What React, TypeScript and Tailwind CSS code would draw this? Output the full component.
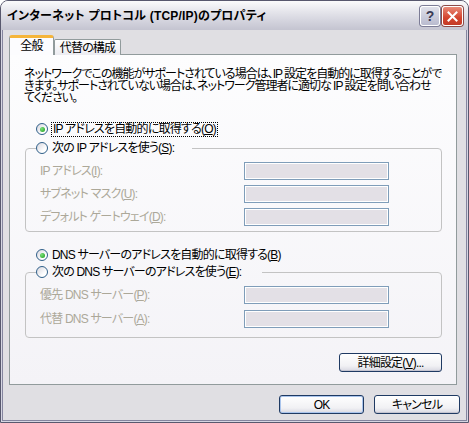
import React from 'react';

const font = "font-['Liberation_Sans','Noto_Sans_CJK_JP',sans-serif] [font-feature-settings:'palt']";

const Radio = ({ checked }: { checked?: boolean }) => (
  <span className="inline-flex w-[12px] h-[12px] shrink-0 items-center justify-center rounded-full border border-[#2f5f89] bg-[linear-gradient(135deg,#d6d6de,#ffffff_70%)]">
    {checked && <span className="w-[5px] h-[5px] rounded-full bg-[radial-gradient(circle_at_35%_35%,#7be07b,#1a9a1a)]" />}
  </span>
);

const Field = () => (
  <div className="w-[145px] h-[18px] border border-[#7f9db9] bg-[#e3e0e6] shadow-[inset_0_0_0_1px_#ffffff]" />
);

const Row = ({ label }: { label: React.ReactNode }) => (
  <div className="flex items-center h-[18px]">
    <span className="ml-[14px] w-[204px] text-[#aca899] whitespace-nowrap">{label}</span>
    <Field />
  </div>
);

const Button = ({ children, def, className = '' }: { children: React.ReactNode; def?: boolean; className?: string }) => (
  <button
    className={`h-[19px] rounded-[3px] border border-[#1f3a63] bg-[linear-gradient(#ffffff,#f1f1f4_70%,#d8d8e2)] text-[12px] leading-none text-black ${
      def ? 'shadow-[inset_0_0_0_1px_#a9c4ec]' : 'shadow-[inset_0_-1px_0_#c4c4d0]'
    } ${className}`}
  >
    {children}
  </button>
);

export default function App() {
  return (
    <div className={`w-[469px] h-[423px] ${font} text-[12px] text-black`}>
      <div className="flex h-full flex-col overflow-hidden rounded-t-[8px] border border-[#58586e] bg-[#e0dfe3]">
        {/* title bar */}
        <div className="flex h-[29px] shrink-0 items-center bg-[linear-gradient(#fbfbfc,#e6e6ec_35%,#d3d3dd_70%,#c4c4d0)] pl-[6px] pr-[5px] pt-[1px]">
          <span className="flex-1 text-[12px] font-bold tracking-[0.2px] whitespace-nowrap">
            インターネット プロトコル (TCP/IP)のプロパティ
          </span>
          <div className="flex items-center gap-[2px]">
            <div className="flex h-[20px] w-[20px] items-center justify-center rounded-[3px] border border-[#ffffff] bg-[linear-gradient(#dfe0ea,#b9bbcf)] shadow-[0_0_0_1px_#7c7c96] text-[14px] font-bold leading-none text-[#3b3b55]">
              ?
            </div>
            <div className="flex h-[20px] w-[21px] items-center justify-center rounded-[3px] border border-[#ffffff] bg-[linear-gradient(#e98a78,#d3442f_60%,#c43a26)] shadow-[0_0_0_1px_#8c4a48]">
              <svg width="11" height="11" viewBox="0 0 11 11">
                <path d="M1.5 1.5 L9.5 9.5 M9.5 1.5 L1.5 9.5" stroke="#ffffff" strokeWidth="2" strokeLinecap="square" />
              </svg>
            </div>
          </div>
        </div>

        {/* window frame */}
        <div className="flex flex-1 flex-col border-x border-b border-[#d6d6e2]">
          <div className="flex flex-1 flex-col border-x border-b border-[#85859f] pl-[6px] pr-[5px] pt-[5px] tracking-[-0.8px]">
            {/* tabs */}
            <div className="relative z-10 flex items-end h-[20px] -mb-[1px]">
              <div className="flex h-[20px] w-[45px] items-center justify-center rounded-t-[3px] border-x border-[#919b9c] border-t-[3px] border-t-[#f5b53a] bg-[#fcfcfe] pb-[1px]">
                全般
              </div>
              <div className="flex h-[16px] w-[67px] items-center justify-center rounded-t-[2px] border border-b-0 border-[#919b9c] bg-[linear-gradient(#ffffff,#ececf1)]">
                代替の構成
              </div>
            </div>

            {/* panel */}
            <div className="flex h-[331px] w-[448px] flex-col border border-[#919b9c] bg-[linear-gradient(#fdfdfe,#f4f3f7)] px-[14px]">
              <p className="mt-[13px] leading-[12px] tracking-[-1px] whitespace-nowrap">
                ネットワークでこの機能がサポートされている場合は、IP 設定を自動的に取得することがで
                <br />
                きます。サポートされていない場合は、ネットワーク管理者に適切な IP 設定を問い合わせ
                <br />
                てください。
              </p>

              <div className="mt-[17px] ml-[12px] flex h-[16px] items-center">
                <Radio checked />
                <span className="ml-[3px] border border-dotted border-black px-[1px] leading-[13px] whitespace-nowrap">
                  IP アドレスを自動的に取得する(<u>O</u>)
                </span>
              </div>

              <fieldset className="mt-[3px] ml-[1px] w-[417px] rounded-[4px] border border-[#c3c3c3] px-0 pt-[6px] pb-[5px]">
                <legend className="ml-[10px] flex h-[16px] w-[156px] items-center p-0">
                  <Radio />
                  <span className="ml-[4px] whitespace-nowrap">
                    次の IP アドレスを使う(<u>S</u>):
                  </span>
                </legend>
                <div className="flex flex-col gap-[5px]">
                  <Row label={<>IP アドレス(<u>I</u>):</>} />
                  <Row label={<>サブネット マスク(<u>U</u>):</>} />
                  <Row label={<>デフォルト ゲートウェイ(<u>D</u>):</>} />
                </div>
              </fieldset>

              <div className="mt-[15px] ml-[12px] flex h-[16px] items-center">
                <Radio checked />
                <span className="ml-[4px] whitespace-nowrap">
                  DNS サーバーのアドレスを自動的に取得する(<u>B</u>)
                </span>
              </div>

              <fieldset className="mt-[1px] ml-[1px] w-[417px] rounded-[4px] border border-[#c3c3c3] px-0 pt-[6px] pb-[9px]">
                <legend className="ml-[10px] flex h-[16px] w-[226px] items-center p-0">
                  <Radio />
                  <span className="ml-[4px] whitespace-nowrap">
                    次の DNS サーバーのアドレスを使う(<u>E</u>):
                  </span>
                </legend>
                <div className="flex flex-col gap-[6px]">
                  <Row label={<>優先 DNS サーバー(<u>P</u>):</>} />
                  <Row label={<>代替 DNS サーバー(<u>A</u>):</>} />
                </div>
              </fieldset>

              <div className="mt-[15px] flex w-[418px] justify-end">
                <Button className="w-[103px]">
                  詳細設定(<u>V</u>)...
                </Button>
              </div>
            </div>

            {/* footer buttons */}
            <div className="mt-[10px] flex justify-end gap-[10px] pr-[1px]">
              <Button def className="w-[85px]">
                OK
              </Button>
              <Button className="w-[86px]">キャンセル</Button>
            </div>
          </div>
        </div>
      </div>
    </div>
  );
}
